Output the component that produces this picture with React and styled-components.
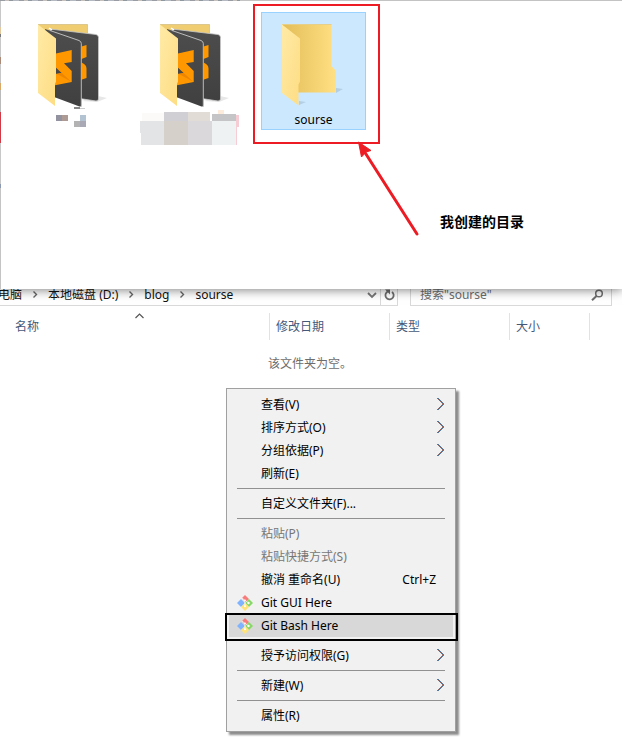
import React from "react";
import styled, { createGlobalStyle } from "styled-components";

const GlobalStyle = createGlobalStyle`
  * { box-sizing: border-box; }
  body {
    margin: 0;
    background: #fff;
    color: #000;
    font: 12px/18px "Noto Sans", "Noto Sans CJK SC", sans-serif;
  }
  button, input { font: inherit; color: inherit; }
  button { margin: 0; padding: 0; border: 0; background: none; text-align: left; }
  svg { display: block; flex: none; }
`;

const Page = styled.main`
  position: relative;
  min-height: 100vh;
`;

/* Upper window: the folder view */

const FolderWindow = styled.section`
  position: relative;
  z-index: 1;
  padding: 1px 0 0 1px;
  background:
    linear-gradient(90deg, transparent 240px, #c3c3c3 240px) 0 0 / 100% 1px no-repeat,
    repeating-linear-gradient(90deg, #9a9ca4 0 5px, #c5c0bb 5px 9px, #8f979f 9px 13px, #b4b8c0 13px 19px) 0 0 / 240px 1px no-repeat,
    linear-gradient(#c8c8c8 0 27px, #e2c9a0 27px 34px, #777 34px 37px, #c8c8c8 37px 57px, #a98a78 57px 64px,
      #c8c8c8 64px 83px, #d8a868 83px 90px, #bbb 90px 112px, #d03a46 112px 143px, #c8c8c8 143px 184px,
      #8b98b0 184px 188px, #c4c4c4 188px) 0 0 / 1px 100% no-repeat;
  box-shadow: 0 1px 10px rgba(0, 0, 0, 0.5);
`;

const FolderArea = styled.div`
  display: flex;
  align-items: flex-start;
  gap: 17px;
  min-height: 288px;
  padding: 11px 16px;
  background: #fff;
`;

const FolderTile = styled.button`
  position: relative;
  width: 105px;
  height: 118px;
  border: 1px solid ${(p) => (p.$selected ? "#99d1ff" : "transparent")};
  background: ${(p) => (p.$selected ? "#cce8ff" : "transparent")};
`;

const TileLabel = styled.span`
  display: block;
  height: 18px;
  text-align: center;
`;

const Highlight = styled.span`
  position: absolute;
  inset: -9px -15px -15px -9px;
  border: 2px solid #ed1c24;
`;

const Arrow = styled.svg`
  position: absolute;
  left: 355px;
  top: 140px;
  z-index: 2;
`;

const Note = styled.p`
  position: absolute;
  left: 440px;
  top: 211px;
  margin: 0;
  font-size: 14px;
  line-height: 22px;
  font-weight: 700;
`;

/* Lower window: the empty directory */

const AddressRow = styled.div`
  display: flex;
  gap: 12px;
  height: 23px;
  margin-top: -6px;
  padding-right: 10px;
`;

const AddressBar = styled.nav`
  display: flex;
  flex: 1;
  align-items: center;
  border: 1px solid #d9d9d9;
  border-left: 0;
`;

const Crumbs = styled.div`
  display: flex;
  flex: 1;
  align-items: center;
  gap: 9px;
  margin-left: -2px;
`;

const Crumb = styled.a`
  color: #111;
  text-decoration: none;
  white-space: nowrap;
`;

const BarButton = styled.button`
  display: grid;
  place-items: center;
  width: 17px;
  height: 21px;
  border-left: ${(p) => (p.$divided ? "1px solid #d9d9d9" : "0")};
`;

const SearchBox = styled.label`
  display: flex;
  align-items: center;
  width: 202px;
  padding: 0 7px 0 9px;
  border: 1px solid #d9d9d9;
`;

const SearchInput = styled.input`
  flex: 1;
  min-width: 0;
  padding: 0;
  border: 0;
  outline: 0;
  background: none;
  &::placeholder { color: #6d6d6d; opacity: 1; }
`;

const FileTable = styled.table`
  width: 100%;
  margin-top: 7px;
  border-collapse: separate;
  border-spacing: 0;
  table-layout: fixed;
`;

const ColumnHead = styled.th`
  position: relative;
  width: ${(p) => p.$width || "auto"};
  height: 27px;
  padding: 0 0 0 ${(p) => (p.$first ? "15px" : "6px")};
  border-right: ${(p) => (p.$width ? "1px solid #e2e2e2" : "0")};
  color: #44597a;
  font-weight: 400;
  text-align: left;
`;

const SortMark = styled.svg`
  position: absolute;
  left: 135px;
  top: 0;
`;

const EmptyCell = styled.td`
  padding: 15px 2px 0 0;
  color: #6d6d6d;
  text-align: center;
`;

/* Context menu */

const Menu = styled.div`
  position: absolute;
  left: 226px;
  top: 388px;
  width: 230px;
  padding: 4px 2px;
  border: 1px solid #a0a0a0;
  background: #f1f1f1;
  box-shadow: 3px 3px 2px rgba(0, 0, 0, 0.45);
`;

const MenuItem = styled.button`
  position: relative;
  display: grid;
  grid-template-columns: 24px 1fr auto;
  align-items: center;
  width: 100%;
  height: 23px;
  padding: 0 8px;
  color: ${(p) => (p.disabled ? "#777" : "#000")};
  background: ${(p) => (p.$active ? "#d8d8d8" : "transparent")};
`;

const Shortcut = styled.span`
  padding-right: 9px;
`;

const Separator = styled.hr`
  height: 1px;
  margin: 3px 8px;
  border: 0;
  background: #919191;
`;

const ItemFrame = styled.span`
  position: absolute;
  inset: -1px -5px -4px -4px;
  border: 2px solid #000;
  z-index: 1;
`;

function OpenFolder() {
  return (
    <svg width="103" height="97" viewBox="262 14 103 97" aria-hidden="true">
      <defs>
        <linearGradient id="back" x1="0" x2="1">
          <stop offset="0" stopColor="#e3bd58" />
          <stop offset="1" stopColor="#ffe083" />
        </linearGradient>
        <linearGradient id="flap" x1="0" x2="1" y2="1">
          <stop offset="0" stopColor="#ffeaa6" />
          <stop offset="1" stopColor="#fedd83" />
        </linearGradient>
      </defs>
      <path d="M336 88l7 1-7 4zM299 101l7 1-7 3z" fill="#a9c3d8" opacity=".7" />
      <path d="M282 24h49.500v42l4.500 5v21.500h-54z" fill="url(#back)" />
      <path d="M282 24.500h49.500" stroke="#e5cf8d" />
      <path d="M282 24.500l18 14v43l-1.500 3v21l-16.500-12.500z" fill="url(#flap)" />
    </svg>
  );
}

function SublimeFolder() {
  return (
    <svg width="103" height="97" viewBox="18 14 103 97" aria-hidden="true">
      <defs>
        <linearGradient id="sheet" x2="0" y2="1">
          <stop offset="0" stopColor="#4d4d4d" />
          <stop offset="1" stopColor="#404040" />
        </linearGradient>
      </defs>
      <path d="M98 96l9 2-10 4-15-1z" fill="#e7e7e7" />
      <path d="M38 24h49.500v30H38z" fill="#efcd70" />
      <path d="M38 24.500h49.500v10" fill="none" stroke="#dcc88e" />
      <path d="M50 29l46 5.500q2.500.5 2.500 3V99q0 2-2.500 2L70 97z" fill="url(#sheet)" stroke="#c9c9c9" strokeWidth=".8" />
      <path d="M81.500 46.500l5-1.500v12l-5 2-1-1zM81.500 62.500q5 2 5 6V78l-6 2z" fill="#ff9800" />
      <path d="M45 29l34 11q2.500 1 2.500 3.500V105q0 2-2 1.500L54 97z" fill="url(#sheet)" />
      <path d="M50 30.500l29 10q2.300 1 2.300 3V107" fill="none" stroke="#c7c7c7" strokeWidth=".9" />
      <path d="M56 53.500L71.700 50v12L64 63.300l7.700 7.700v11L55 85.300V74l6.700-1L56 67.700z" fill="#ff9800" />
      <path d="M57 74l4.700-1 10 9z" fill="#ee8500" />
      <path d="M38 24.500l18 14v43L55 84v22L38 93z" fill="url(#flap)" />
      <path d="M49 28l3 2" stroke="#fff" strokeWidth="1.500" />
    </svg>
  );
}

const mosaics = {
  small: {
    view: "18 111 103 18",
    cells: [
      [74, 107, 6, 2, "#858585"], [80, 108, 5, 1, "#ccc"], [56, 115, 6, 6, "#93939f"], [62, 115, 6, 6, "#ad9a94"],
      [80, 115, 6, 6, "#b3c3d1"], [74, 121, 6, 6, "#b3b3b3"], [80, 121, 6, 6, "#a9a9b5"],
    ],
  },
  large: {
    view: "140 111 103 18",
    cells: [
      [218, 110, 6, 4, "#fdecdc"], [232, 115, 7, 12, "#f5ccd4"], [234, 126, 3, 19, "#f8ccd4"],
      [142, 113, 22, 8, "#fbfaf9"], [164, 112, 24, 9, "#d0d0d4"], [188, 112, 22, 9, "#e2dcd6"], [212, 114, 24, 7, "#c5c5c7"],
      [140, 121, 24, 12, "#e2e4e6"], [141, 133, 23, 12, "#e2e4e6"], [164, 121, 24, 24, "#d6d0ca"],
      [188, 121, 24, 24, "#dad8da"], [212, 121, 24, 24, "#eef2f2"],
    ],
  },
};

function Mosaic({ kind }) {
  const { view, cells } = mosaics[kind];
  return (
    <svg width="103" height="18" viewBox={view} overflow="visible" aria-hidden="true">
      {cells.map(([x, y, w, h, fill]) => (
        <rect key={`${x}-${y}`} x={x} y={y} width={w} height={h} fill={fill} />
      ))}
    </svg>
  );
}

function GitIcon() {
  return (
    <svg width="16" height="16" viewBox="0 0 16 16" aria-hidden="true">
      <path d="M8 0l4 4-3.500 3.500L5 3z" fill="#f97c7c" />
      <path d="M4 4l4 4-4 4-4-4z" fill="#80b3ff" />
      <path d="M12 4l4 4-4 4-4-4z" fill="#87d867" />
      <path d="M8 8l4 4-4 4-4-4z" fill="#ffe37a" />
      <path d="M5 3l3 2.500v6M8.500 5.500l2.500 2.200" fill="none" stroke="#fff" strokeWidth=".7" />
      <circle cx="8" cy="5.300" r=".9" fill="#fff" />
      <circle cx="11.500" cy="8" r="1.200" fill="#fff" />
      <circle cx="8" cy="11.300" r="1" fill="#fff" />
    </svg>
  );
}

function SubmenuMark() {
  return (
    <svg width="9" height="15" viewBox="0 0 9 15" aria-hidden="true">
      <path d="M2 1l6 6-6 6" fill="none" stroke="#4b9be0" />
      <path d="M1.300 1l6 6-6 6" fill="none" stroke="#622d28" />
    </svg>
  );
}

function CrumbMark() {
  return (
    <svg width="8" height="9" viewBox="0 0 8 9" aria-hidden="true">
      <path d="M2.500 1.500l3 3-3 3" fill="none" stroke="#666" strokeWidth="1.400" />
    </svg>
  );
}

const crumbs = ["电脑", "本地磁盘 (D:)", "blog", "sourse"];

const menu = [
  { text: "查看(V)", sub: true },
  { text: "排序方式(O)", sub: true },
  { text: "分组依据(P)", sub: true },
  { text: "刷新(E)" },
  null,
  { text: "自定义文件夹(F)..." },
  null,
  { text: "粘贴(P)", disabled: true },
  { text: "粘贴快捷方式(S)", disabled: true },
  { text: "撤消 重命名(U)", shortcut: "Ctrl+Z" },
  { text: "Git GUI Here", git: true },
  { text: "Git Bash Here", git: true, active: true },
  null,
  { text: "授予访问权限(G)", sub: true },
  null,
  { text: "新建(W)", sub: true },
  null,
  { text: "属性(R)" },
];

export default function App() {
  return (
    <Page>
      <GlobalStyle />
      <FolderWindow>
        <FolderArea>
          <FolderTile aria-label="Folder 1">
            <SublimeFolder />
            <TileLabel><Mosaic kind="small" /></TileLabel>
          </FolderTile>
          <FolderTile aria-label="Folder 2">
            <SublimeFolder />
            <TileLabel><Mosaic kind="large" /></TileLabel>
          </FolderTile>
          <FolderTile $selected>
            <OpenFolder />
            <TileLabel>sourse</TileLabel>
            <Highlight />
          </FolderTile>
        </FolderArea>
        <Arrow width="66" height="98" viewBox="355 140 66 98" aria-hidden="true">
          <path d="M364 151l53 83" stroke="#ed1c24" strokeWidth="3" strokeLinecap="round" />
          <path d="M358.500 142l12.500 8.500-5 1.500-4.500 5z" fill="#ed1c24" stroke="#ed1c24" />
        </Arrow>
        <Note>我创建的目录</Note>
      </FolderWindow>

      <AddressRow>
        <AddressBar aria-label="地址">
          <Crumbs>
            {crumbs.map((name, i) => (
              <React.Fragment key={name}>
                {i > 0 && <CrumbMark />}
                <Crumb href="#">{name}</Crumb>
              </React.Fragment>
            ))}
          </Crumbs>
          <BarButton aria-label="历史记录">
            <svg width="10" height="8" viewBox="0 0 10 8" aria-hidden="true">
              <path d="M1 2l4 4 4-4" fill="none" stroke="#777" strokeWidth="1.800" />
            </svg>
          </BarButton>
          <BarButton aria-label="刷新" $divided>
            <svg width="11" height="12" viewBox="0 0 11 12" aria-hidden="true">
              <path d="M8 3A4.100 4.100 0 1 1 2.300 3.800L4 2" fill="none" stroke="#6d6d6d" strokeWidth="1.800" />
              <path d="M1 .5h5v5L4.300 3.800z" fill="#6d6d6d" />
            </svg>
          </BarButton>
        </AddressBar>
        <SearchBox>
          <SearchInput aria-label="搜索" placeholder={'搜索"sourse"'} />
          <svg width="13" height="12" viewBox="0 0 13 12" aria-hidden="true">
            <circle cx="8" cy="4.500" r="3.300" fill="none" stroke="#6d6d6d" strokeWidth="1.500" />
            <path d="M5.500 7L1 11.300" stroke="#6d6d6d" strokeWidth="2" />
          </svg>
        </SearchBox>
      </AddressRow>

      <FileTable>
        <thead>
          <tr>
            <ColumnHead $first $width="270px">
              名称
              <SortMark width="9" height="6" viewBox="0 0 9 6" aria-hidden="true">
                <path d="M.5 5l4-4 4 4" fill="none" stroke="#555" strokeWidth="1.200" />
              </SortMark>
            </ColumnHead>
            <ColumnHead $width="120px">修改日期</ColumnHead>
            <ColumnHead $width="120px">类型</ColumnHead>
            <ColumnHead $width="80px">大小</ColumnHead>
            <ColumnHead as="td" />
          </tr>
        </thead>
        <tbody>
          <tr>
            <EmptyCell colSpan={5}>该文件夹为空。</EmptyCell>
          </tr>
        </tbody>
      </FileTable>

      <Menu role="menu">
        {menu.map((item, i) =>
          item ? (
            <MenuItem key={item.text} role="menuitem" disabled={item.disabled} $active={item.active}>
              <span>{item.git && <GitIcon />}</span>
              <span>{item.text}</span>
              {item.sub && <SubmenuMark />}
              {item.shortcut && <Shortcut>{item.shortcut}</Shortcut>}
              {item.active && <ItemFrame />}
            </MenuItem>
          ) : (
            <Separator key={i} />
          )
        )}
      </Menu>
    </Page>
  );
}
